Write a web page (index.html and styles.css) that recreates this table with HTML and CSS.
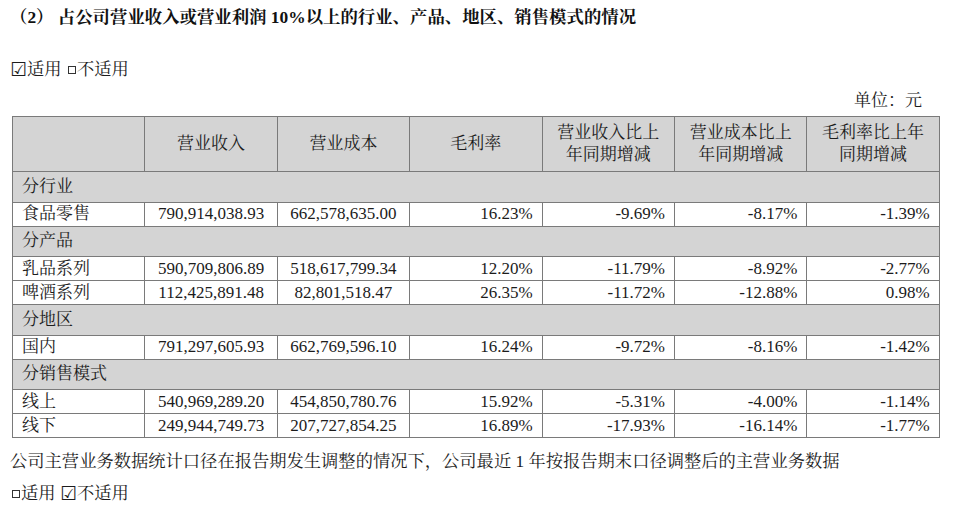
FILE: index.html
```html
<!DOCTYPE html>
<html lang="zh-CN">
<head>
<meta charset="utf-8">
<title>主营业务分行业情况</title>
<link rel="stylesheet" href="styles.css">
</head>
<body>
<div class="page">
  <h2 class="title">（2） 占公司营业收入或营业利润 10%以上的行业、产品、地区、销售模式的情况</h2>
  <p class="check-line"><span class="box checked">☑</span>适用 <span class="box small"></span>不适用</p>
  <p class="unit">单位：元</p>
  <table class="data">
    <colgroup>
      <col class="c1"><col class="c2"><col class="c3"><col class="c4"><col class="c5"><col class="c6"><col class="c7">
    </colgroup>
    <thead>
      <tr class="head">
        <th></th>
        <th>营业收入</th>
        <th>营业成本</th>
        <th>毛利率</th>
        <th>营业收入比上<br>年同期增减</th>
        <th>营业成本比上<br>年同期增减</th>
        <th>毛利率比上年<br>同期增减</th>
      </tr>
    </thead>
    <tbody>
      <tr class="cat"><td colspan="7">分行业</td></tr>
      <tr class="row"><td class="name">食品零售</td><td class="mid">790,914,038.93</td><td class="mid">662,578,635.00</td><td class="num">16.23%</td><td class="num">-9.69%</td><td class="num">-8.17%</td><td class="num">-1.39%</td></tr>
      <tr class="cat"><td colspan="7">分产品</td></tr>
      <tr class="row"><td class="name">乳品系列</td><td class="mid">590,709,806.89</td><td class="mid">518,617,799.34</td><td class="num">12.20%</td><td class="num">-11.79%</td><td class="num">-8.92%</td><td class="num">-2.77%</td></tr>
      <tr class="row"><td class="name">啤酒系列</td><td class="mid">112,425,891.48</td><td class="mid">82,801,518.47</td><td class="num">26.35%</td><td class="num">-11.72%</td><td class="num">-12.88%</td><td class="num">0.98%</td></tr>
      <tr class="cat"><td colspan="7">分地区</td></tr>
      <tr class="row"><td class="name">国内</td><td class="mid">791,297,605.93</td><td class="mid">662,769,596.10</td><td class="num">16.24%</td><td class="num">-9.72%</td><td class="num">-8.16%</td><td class="num">-1.42%</td></tr>
      <tr class="cat"><td colspan="7">分销售模式</td></tr>
      <tr class="row"><td class="name">线上</td><td class="mid">540,969,289.20</td><td class="mid">454,850,780.76</td><td class="num">15.92%</td><td class="num">-5.31%</td><td class="num">-4.00%</td><td class="num">-1.14%</td></tr>
      <tr class="row"><td class="name">线下</td><td class="mid">249,944,749.73</td><td class="mid">207,727,854.25</td><td class="num">16.89%</td><td class="num">-17.93%</td><td class="num">-16.14%</td><td class="num">-1.77%</td></tr>
    </tbody>
  </table>
  <p class="note">公司主营业务数据统计口径在报告期发生调整的情况下，公司最近 1 年按报告期末口径调整后的主营业务数据</p>
  <p class="check-line2"><span class="box small"></span>适用 <span class="box checked">☑</span>不适用</p>
</div>
</body>
</html>
```
FILE: styles.css
```css
html, body {
  margin: 0;
  padding: 0;
  background: #ffffff;
}
body {
  font-family: "Liberation Serif", "Noto Serif CJK SC", "Noto Sans CJK SC", serif;
  color: #1c1c1c;
  font-size: 17px;
}
.page {
  padding: 5px 21px 0 10px;
}
.title {
  margin: 0;
  font-size: 17.4px;
  font-weight: bold;
  line-height: 24px;
  height: 24px;
  color: #111;
}
.check-line {
  margin: 29px 0 0 0;
  line-height: 24px;
  height: 24px;
  font-size: 17.3px;
}
.box {
  display: inline-block;
}
.box.checked {
  font-family: "DejaVu Sans", sans-serif;
  font-size: 19px;
  line-height: 1;
  vertical-align: -1px;
}
.box.small {
  width: 6px;
  height: 6px;
  border: 1px solid #333;
  margin: 0 1px 0 2px;
  vertical-align: 1px;
}
.unit {
  margin: 7px 17px 0 0;
  text-align: right;
  line-height: 24px;
  height: 24px;
  font-size: 17px;
}
.data {
  margin: 3px 0 0 2px;
  border-collapse: collapse;
  width: 927px;
  table-layout: fixed;
  font-size: 17px;
}
.data col { width: 132.4px; }
.data th, .data td {
  border: 1px solid #7a7a7a;
  padding: 0 9px;
  white-space: nowrap;
  overflow: hidden;
}
.head th {
  background: #d4d4d4;
  font-weight: normal;
  height: 54px;
  text-align: center;
  line-height: 22px;
  vertical-align: middle;
}
.cat td {
  background: #d4d4d4;
  height: 29.5px;
  text-align: left;
  line-height: 20px;
}
.row td {
  background: #ffffff;
  height: 23px;
  line-height: 20px;
}
.row td.name { text-align: left; }
.row td.mid { text-align: center; padding: 0 4px; }
.row td.num { text-align: right; }
.note {
  margin: 12px 0 0 0;
  line-height: 24px;
  height: 24px;
  font-size: 17.3px;
}
.check-line2 {
  margin: 8px 0 0 0;
  line-height: 24px;
  height: 24px;
  font-size: 17.3px;
}
```
